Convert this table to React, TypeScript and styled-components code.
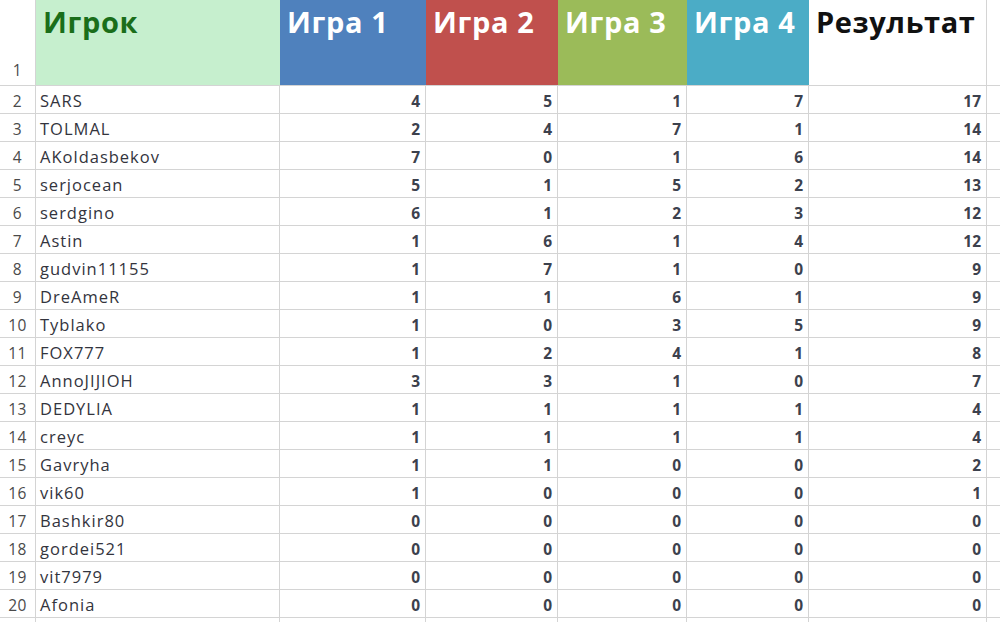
import styled, { createGlobalStyle } from "styled-components";

const GlobalStyle = createGlobalStyle`
  html, body {
    margin: 0;
    padding: 0;
    background: #ffffff;
    overflow: hidden;
  }
`;

interface Player {
  name: string;
  games: number[];
}

const players: Player[] = [
  { name: "SARS", games: [4, 5, 1, 7] },
  { name: "TOLMAL", games: [2, 4, 7, 1] },
  { name: "AKoldasbekov", games: [7, 0, 1, 6] },
  { name: "serjocean", games: [5, 1, 5, 2] },
  { name: "serdgino", games: [6, 1, 2, 3] },
  { name: "Astin", games: [1, 6, 1, 4] },
  { name: "gudvin11155", games: [1, 7, 1, 0] },
  { name: "DreAmeR", games: [1, 1, 6, 1] },
  { name: "Tyblako", games: [1, 0, 3, 5] },
  { name: "FOX777", games: [1, 2, 4, 1] },
  { name: "AnnoJIJIOH", games: [3, 3, 1, 0] },
  { name: "DEDYLIA", games: [1, 1, 1, 1] },
  { name: "creyc", games: [1, 1, 1, 1] },
  { name: "Gavryha", games: [1, 1, 0, 0] },
  { name: "vik60", games: [1, 0, 0, 0] },
  { name: "Bashkir80", games: [0, 0, 0, 0] },
  { name: "gordei521", games: [0, 0, 0, 0] },
  { name: "vit7979", games: [0, 0, 0, 0] },
  { name: "Afonia", games: [0, 0, 0, 0] },
];

const games = [
  { title: "Игра 1", color: "#4f81bd" },
  { title: "Игра 2", color: "#c0504d" },
  { title: "Игра 3", color: "#9bbb59" },
  { title: "Игра 4", color: "#4bacc6" },
];

const Sheet = styled.div`
  display: grid;
  grid-template-columns: 35px 243px 145px 131px 128px 121px 177px 1fr;
  grid-template-rows: 85px repeat(20, 27px);
  gap: 1px;
  width: 1000px;
  height: 622px;
  background: #d4d4d4;
  font-family: "Open Sans", "Liberation Sans", sans-serif;
  overflow: hidden;
`;

const Cell = styled.div`
  background: #ffffff;
  display: flex;
  align-items: flex-end;
  padding: 0 4px 2px;
  font-size: 15.5px;
  line-height: 20px;
  white-space: nowrap;
  overflow: hidden;
`;

const RowNum = styled(Cell)`
  justify-content: center;
  padding: 0 0 2px;
  color: #4a4a4a;
  letter-spacing: 0.5px;
`;

const Name = styled(Cell)`
  color: #33343d;
  font-size: 16.5px;
  letter-spacing: 1px;
`;

const Num = styled(Cell)`
  justify-content: flex-end;
  padding-right: 5px;
  font-weight: 700;
  color: #3c414d;
`;

const Head = styled.div<{ $bg: string; $fg: string }>`
  background: ${(p) => p.$bg};
  color: ${(p) => p.$fg};
  margin-right: -1px;
  padding: 2px 0 0 7px;
  font-size: 29px;
  font-weight: 700;
  letter-spacing: 0.6px;
  line-height: 40px;
  white-space: nowrap;
  overflow: hidden;
`;

const HeadNum = styled(RowNum)`
  padding-bottom: 5px;
`;

const Blank = styled.div`
  background: #ffffff;
`;

export default function App() {
  return (
    <>
      <GlobalStyle />
      <Sheet>
        <HeadNum>1</HeadNum>
        <Head $bg="#c6efce" $fg="#1a6e1a">
          Игрок
        </Head>
        {games.map((g) => (
          <Head key={g.title} $bg={g.color} $fg="#ffffff">
            {g.title}
          </Head>
        ))}
        <Head $bg="#ffffff" $fg="#111111" style={{ marginRight: 0 }}>
          Результат
        </Head>
        <Blank />
        {players.map((p, i) => (
          <Row key={p.name} index={i + 2} player={p} />
        ))}
        <RowNum />
        <Cell />
        <Cell />
        <Cell />
        <Cell />
        <Cell />
        <Cell />
        <Blank />
      </Sheet>
    </>
  );
}

const Row = ({ index, player }: { index: number; player: Player }) => (
  <>
    <RowNum>{index}</RowNum>
    <Name>{player.name}</Name>
    {player.games.map((g, i) => (
      <Num key={i}>{g}</Num>
    ))}
    <Num>{player.games.reduce((a, b) => a + b, 0)}</Num>
    <Blank />
  </>
);
